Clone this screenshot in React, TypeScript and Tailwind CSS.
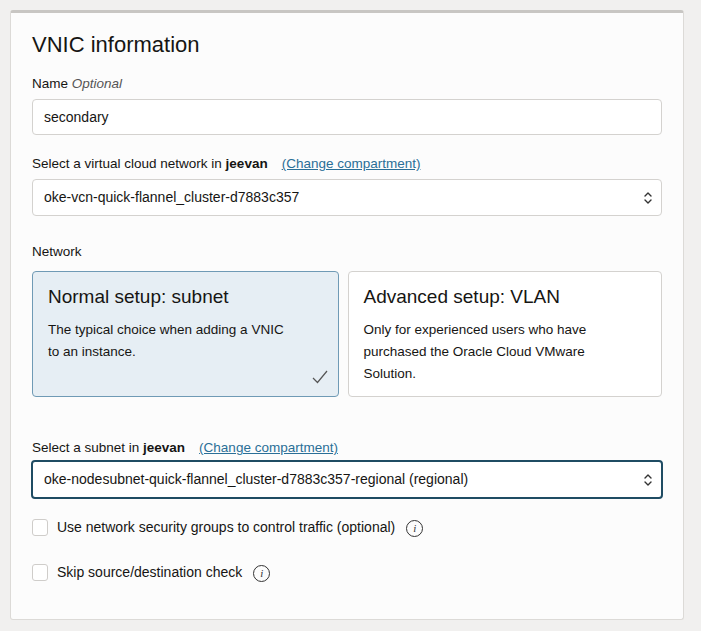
import React from "react";

const Chevrons = () => (
  <svg width="10" height="16" viewBox="0 0 10 16" fill="none" stroke="#333" strokeWidth="1.4" strokeLinecap="round" strokeLinejoin="round">
    <path d="M2 6 L5 3 L8 6" />
    <path d="M2 10 L5 13 L8 10" />
  </svg>
);

const Info = () => (
  <span className="inline-flex items-center justify-center w-[17px] h-[17px] rounded-full border border-[#333] text-[11px] italic leading-none font-[Liberation_Serif,serif] text-[#333]">i</span>
);

export default function App() {
  return (
    <div className="w-[701px] h-[631px] bg-[#f1f0ef] pt-[10px] pl-[10px] font-[Liberation_Sans,Arial,sans-serif] text-[#161513]">
      <div className="w-[674px] h-[610px] bg-[#fcfcfc] border border-[#dcdad7] border-t-[3px] border-t-[#c8c6c3] rounded-[3px] px-[21px] pt-[17px]">
        <h2 className="text-[22px] leading-[30px]">VNIC information</h2>
        <div className="mt-[15px] text-[13.5px] leading-[18px]">Name <span className="italic text-[#555]">Optional</span></div>
        <div className="mt-[6px] h-[36px] border border-[#d4d2cf] rounded-[4px] bg-white flex items-center px-[11px] text-[14px]">secondary</div>
        <div className="mt-[20px] text-[13.5px] leading-[18px]">Select a virtual cloud network in <b>jeevan</b><span className="ml-[14px] text-[#2a6f97] underline">(Change compartment)</span></div>
        <div className="mt-[6px] h-[37px] border border-[#d4d2cf] rounded-[4px] bg-white flex items-center justify-between px-[11px] pr-[8px] text-[14px]">oke-vcn-quick-flannel_cluster-d7883c357<Chevrons /></div>
        <div className="mt-[27px] text-[13.5px] leading-[18px]">Network</div>
        <div className="mt-[10px] flex gap-[9px]">
          <div className="relative w-[307px] h-[126px] border border-[#6f9ab5] rounded-[4px] bg-[#e6eef4] px-[15px] pt-[12px]">
            <div className="text-[19px] leading-[26px]">Normal setup: subnet</div>
            <div className="mt-[9px] text-[13.5px] leading-[22px]">The typical choice when adding a VNIC<br />to an instance.</div>
            <svg className="absolute right-[10px] bottom-[12px]" width="16" height="14" viewBox="0 0 16 14" fill="none" stroke="#555" strokeWidth="1.2"><path d="M1 8 L5.5 12.5 L15 1" /></svg>
          </div>
          <div className="w-[315px] h-[126px] border border-[#d4d2cf] rounded-[4px] bg-white px-[15px] pt-[12px]">
            <div className="text-[19px] leading-[26px]">Advanced setup: VLAN</div>
            <div className="mt-[9px] text-[13.5px] leading-[22px]">Only for experienced users who have<br />purchased the Oracle Cloud VMware<br />Solution.</div>
          </div>
        </div>
        <div className="mt-[42px] text-[13.5px] leading-[18px]">Select a subnet in <b>jeevan</b><span className="ml-[14px] text-[#2a6f97] underline">(Change compartment)</span></div>
        <div className="mt-[3px] -ml-[1px] w-[632px] h-[39px] border-2 border-[#1f4c63] rounded-[4px] bg-white flex items-center justify-between px-[11px] pr-[8px] text-[14px]">oke-nodesubnet-quick-flannel_cluster-d7883c357-regional (regional)<Chevrons /></div>
        <div className="mt-[18px] flex items-center gap-[9px] text-[14px]">
          <span className="w-[16px] h-[17px] border border-[#cfcdca] rounded-[3px] bg-white" />
          Use network security groups to control traffic (optional)<span className="ml-[2px]"><Info /></span>
        </div>
        <div className="mt-[24px] flex items-center gap-[9px] text-[14px]">
          <span className="w-[16px] h-[17px] border border-[#cfcdca] rounded-[3px] bg-white" />
          Skip source/destination check<span className="ml-[2px]"><Info /></span>
        </div>
      </div>
    </div>
  );
}
